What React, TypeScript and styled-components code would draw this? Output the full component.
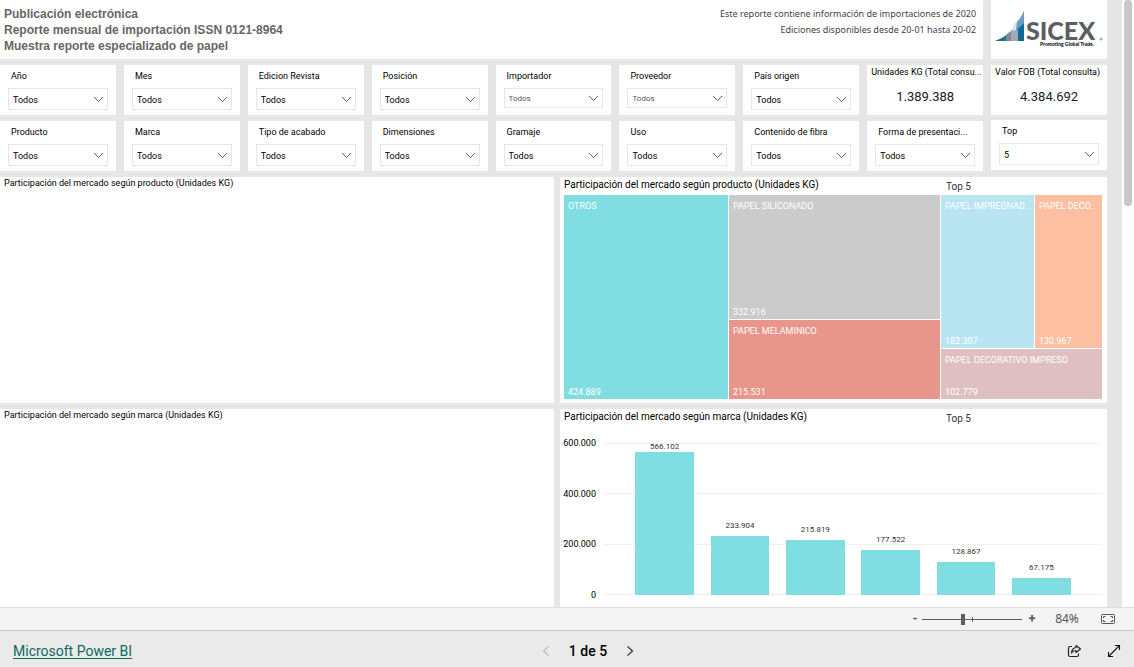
import React from 'react';
import styled, { createGlobalStyle, css } from 'styled-components';

const GlobalStyle = createGlobalStyle`
  * { box-sizing: border-box; }
  html, body, #root { height: 100%; margin: 0; }
  body { font-family: Roboto, "Noto Sans", sans-serif; font-size: 9px; color: #000; background: #fff; }
  h1, h2, p { margin: 0; }
`;

const TEAL = '#80dde1';

const Shell = styled.div`
  display: flex;
  flex-direction: column;
  height: 100vh;
`;

const Viewport = styled.div`
  flex: 1;
  min-height: 0;
  display: flex;
  overflow: hidden;
`;

const Report = styled.main`
  flex: 1;
  min-width: 0;
  padding-right: 15px;
  background: #e6e6e6;
`;

const ScrollTrack = styled.div`
  width: 12px;
  padding: 0 2px;
`;

const ScrollThumb = styled.div`
  height: 34%;
  border-radius: 4px;
  background: #c8c8c8;
`;

const CardGrid = styled.div`
  display: grid;
  grid-template-columns: repeat(9, minmax(0, 1fr));
  column-gap: 8px;
  row-gap: 6px;
  margin-bottom: 6px;
`;

const Card = styled.section`
  background: #fff;
  min-width: 0;
`;

const Header = styled(Card)`
  grid-column: span 8;
  display: flex;
  justify-content: space-between;
  height: 59px;
  padding: 6px 7px 0 4px;
`;

const Heading = styled.h1`
  font: bold 12px/16px "Liberation Sans", Arial, sans-serif;
  color: #666;
`;

const HeaderNote = styled.p`
  font: 9px/16px "Noto Sans", sans-serif;
  color: #444;
  text-align: right;
`;

const LogoCard = styled(Card)`
  display: flex;
  justify-content: center;
  align-items: flex-start;
  padding-top: 8px;
`;

const FilterCard = styled(Card)<{ $raised?: boolean }>`
  display: flex;
  flex-direction: column;
  gap: 6px;
  height: 50px;
  padding: 5px 8px 0;
  ${(p) => p.$raised && css`margin-top: -1px;`}
`;

const FilterLabel = styled.label`
  padding-left: 3px;
  line-height: 12px;
  white-space: nowrap;
`;

const SelectBox = styled.div`
  display: grid;
  align-items: center;
  border: 1px solid #e6e6e6;

  > * { grid-area: 1 / 1; }
  > svg { justify-self: end; margin-right: 3px; pointer-events: none; }
`;

const Select = styled.select<{ $muted?: boolean }>`
  appearance: none;
  width: 100%;
  height: ${(p) => (p.$muted ? 18 : 20)}px;
  padding: ${(p) => (p.$muted ? 0 : 2)}px 20px 0 4px;
  border: 0;
  border-radius: 0;
  background: transparent;
  font: ${(p) => (p.$muted ? 8 : 9)}px Roboto, sans-serif;
  color: ${(p) => (p.$muted ? '#555' : '#000')};
`;

const MetricCard = styled(Card)`
  height: 50px;
  padding: 0 4px;
  text-align: center;
`;

const MetricLabel = styled.h2`
  font-weight: 400;
  font-size: 9px;
  line-height: 14px;
  text-align: left;
  white-space: nowrap;
`;

const MetricValue = styled.p`
  padding-top: 8px;
  font-size: 13px;
  line-height: 20px;
  color: #222;
`;

const PanelGrid = styled.div`
  display: grid;
  grid-template-columns: minmax(0, 554fr) minmax(0, 547fr);
  gap: 6px;
`;

const Panel = styled(Card)`
  display: flex;
  flex-direction: column;
  height: 226px;
  padding: 0 5px 4px 4px;
`;

const PanelHead = styled.header`
  display: grid;
  grid-template-columns: 382fr 156fr;
  height: 18px;
`;

const PanelTitle = styled.h2<{ $small?: boolean }>`
  font-weight: 400;
  font-size: ${(p) => (p.$small ? 9 : 10)}px;
  line-height: ${(p) => (p.$small ? 13 : 16)}px;
  white-space: nowrap;
`;

const TopBadge = styled.p`
  padding-top: 2px;
  font-size: 10px;
  line-height: 16px;
  color: #333;
`;

const Treemap = styled.div`
  flex: 1;
  display: grid;
  grid-template-columns: 164fr 211fr 161fr;
  gap: 1px;
`;

const TreeColumn = styled.div<{ $rows: string }>`
  display: grid;
  grid-template-rows: ${(p) => p.$rows};
  gap: 1px;
`;

const TreeRow = styled.div`
  display: grid;
  grid-template-columns: 93fr 67fr;
  gap: 1px;
`;

const Tile = styled.div<{ $color: string }>`
  display: flex;
  flex-direction: column;
  justify-content: space-between;
  min-width: 0;
  padding: 5px 4px 1px;
  background: ${(p) => p.$color};
  color: #fff;
  line-height: 12px;
  white-space: nowrap;
`;

const Chart = styled.div`
  display: flex;
  gap: 8px;
  margin-top: 10px;
  padding-left: 1px;
`;

const Axis = styled.div`
  display: flex;
  flex-direction: column;
  justify-content: space-between;
  align-items: flex-end;
  width: 31px;
  height: 164px;
  line-height: 12px;
`;

const gridLine = 'linear-gradient(#f0f0f0 0 0)';

const Plot = styled.div`
  flex: 1;
  display: grid;
  grid-template-columns: repeat(6, minmax(0, 1fr));
  align-items: end;
  height: 152px;
  margin-top: 6px;
  padding: 0 23px;
  background:
    ${gridLine} 0 0 / 100% 1px no-repeat,
    ${gridLine} 0 33% / 100% 1px no-repeat,
    ${gridLine} 0 67% / 100% 1px no-repeat,
    ${gridLine} 0 100% / 100% 1px no-repeat;
`;

const Column = styled.div`
  display: flex;
  flex-direction: column;
  justify-content: flex-end;
  align-items: center;
  height: 152px;
`;

const BarValue = styled.span`
  height: 15px;
  font-size: 8px;
  line-height: 10px;
  color: #333;
`;

const Bar = styled.div`
  flex-shrink: 0;
  width: 78%;
  background: ${TEAL};
`;

const ZoomBar = styled.div`
  display: flex;
  align-items: center;
  justify-content: flex-end;
  height: 24px;
  padding-right: 18px;
  border-top: 1px solid #ddd;
  border-bottom: 1px solid #c8c8c8;
  background: #f4f4f4;
  color: #555;
`;

const IconButton = styled.button`
  display: flex;
  align-items: center;
  justify-content: center;
  padding: 0;
  border: 0;
  background: none;
  color: inherit;
  font: bold 13px/16px Roboto, sans-serif;

  &:disabled { color: #bbb; }
`;

const StepButton = styled(IconButton)`
  width: 10px;
  height: 16px;
`;

const Slider = styled.input`
  appearance: none;
  width: 100px;
  height: 12px;
  margin: 0 5px 0 2px;
  background: linear-gradient(#605e5c 0 0) 0 6px / 100% 1px no-repeat,
    linear-gradient(#605e5c 0 0) 50px 4px / 1px 5px no-repeat;

  &::-webkit-slider-thumb {
    appearance: none;
    width: 4px;
    height: 11px;
    background: #605e5c;
  }
`;

const ZoomValue = styled.output`
  width: 40px;
  margin: 0 13px 0 10px;
  text-align: center;
  font: 12px/16px "Noto Sans", sans-serif;
`;

const Footer = styled.footer`
  display: grid;
  grid-template-columns: 1fr auto 1fr;
  align-items: center;
  height: 36px;
  padding: 3px 13px 0;
  background: #eaeaea;
`;

const BrandLink = styled.a`
  justify-self: start;
  font-size: 14px;
  line-height: 20px;
  color: #0b6a5c;
  text-underline-offset: 2px;
`;

const Pager = styled.nav`
  display: flex;
  align-items: center;
  gap: 19px;
  padding-left: 42px;
  font-size: 14px;
  font-weight: 500;
  line-height: 20px;
`;

const Actions = styled.div`
  display: flex;
  align-items: center;
  justify-self: end;
  gap: 25px;
`;

const Logo = () => (
  <svg width="110" height="42" viewBox="0 0 110 42" role="img" aria-label="SICEX">
    <path d="M1 33C14 28 25 17 30 3V33Z" fill="#8fb0cb" />
    <path d="M1 33C7 31 12 28 16 24L14 33Z" fill="#24708f" />
    <path d="M12 33V27L16 24L19 26V33Z" fill="#818a90" />
    <path d="M17 33V25L20 23L24 26V33Z" fill="#a3a9ad" />
    <path d="M20 17C25 12 28 8 30 3V17L25 23L20 22Z" fill="#6c9bc2" />
    <path d="M19 18L23 14L22 22L19 23Z" fill="#dbe5ec" />
    <path d="M24 21L30 15V33H24Z" fill="#0e6c96" />
    <text x="32" y="32" fontFamily="Lato, sans-serif" fontWeight="900" fontSize="25" fill="#5a6062">SICEX</text>
    <circle cx="107" cy="31" r="1.5" fill="#aaa" />
    <text x="46" y="38" fontFamily="Lato, sans-serif" fontWeight="900" fontSize="5" fill="#111">Promoting Global Trade.</text>
  </svg>
);

const Chevron = () => (
  <svg width="11" height="7" viewBox="0 0 11 7" fill="none" stroke="#666" strokeWidth="1">
    <path d="M1 1L5.5 5.5L10 1" />
  </svg>
);

type FilterProps = { label: string; value?: string; muted?: boolean; raised?: boolean };

const Filter = ({ label, value = 'Todos', muted, raised }: FilterProps) => {
  const id = React.useId();
  return (
    <FilterCard $raised={raised}>
      <FilterLabel htmlFor={id}>{label}</FilterLabel>
      <SelectBox>
        <Select id={id} $muted={muted} defaultValue={value}>
          <option>{value}</option>
        </Select>
        <Chevron />
      </SelectBox>
    </FilterCard>
  );
};

const Metric = ({ label, value }: { label: string; value: string }) => (
  <MetricCard>
    <MetricLabel>{label}</MetricLabel>
    <MetricValue>{value}</MetricValue>
  </MetricCard>
);

const TreeTile = ({ name, value, color }: { name: string; value: string; color: string }) => (
  <Tile $color={color}>
    <span>{name}</span>
    <span>{value}</span>
  </Tile>
);

const firstRow: FilterProps[] = [
  { label: 'Año' }, { label: 'Mes' }, { label: 'Edicion Revista' }, { label: 'Posición' },
  { label: 'Importador', muted: true }, { label: 'Proveedor', muted: true }, { label: 'País origen' },
];

const secondRow: FilterProps[] = [
  { label: 'Producto' }, { label: 'Marca' }, { label: 'Tipo de acabado' }, { label: 'Dimensiones' },
  { label: 'Gramaje' }, { label: 'Uso' }, { label: 'Contenido de fibra' },
  { label: 'Forma de presentaci...' }, { label: 'Top', value: '5', raised: true },
];

const brands = [566102, 233904, 215819, 177522, 128867, 67175];
const AXIS_MAX = 600000;
const thousands = (n: number) => String(n).replace(/(\d)(?=(\d{3})+$)/g, '$1.');

export default function App() {
  return (
    <Shell>
      <GlobalStyle />
      <Viewport>
        <Report>
          <CardGrid>
            <Header>
              <Heading>
                Publicación electrónica<br />
                Reporte mensual de importación ISSN 0121-8964<br />
                Muestra reporte especializado de papel
              </Heading>
              <HeaderNote>
                Este reporte contiene información de importaciones de 2020<br />
                Ediciones disponibles desde 20-01 hasta 20-02
              </HeaderNote>
            </Header>
            <LogoCard><Logo /></LogoCard>
            {firstRow.map((f) => <Filter key={f.label} {...f} />)}
            <Metric label="Unidades KG (Total consu..." value="1.389.388" />
            <Metric label="Valor FOB (Total consulta)" value="4.384.692" />
            {secondRow.map((f) => <Filter key={f.label} {...f} />)}
          </CardGrid>
          <PanelGrid>
            <Panel>
              <PanelTitle $small>Participación del mercado según producto (Unidades KG)</PanelTitle>
            </Panel>
            <Panel>
              <PanelHead>
                <PanelTitle>Participación del mercado según producto (Unidades KG)</PanelTitle>
                <TopBadge>Top 5</TopBadge>
              </PanelHead>
              <Treemap>
                <TreeTile name="OTROS" value="424.889" color={TEAL} />
                <TreeColumn $rows="123fr 79fr">
                  <TreeTile name="PAPEL SILICONADO" value="332.916" color="#cbcbcb" />
                  <TreeTile name="PAPEL MELAMINICO" value="215.531" color="#e8958b" />
                </TreeColumn>
                <TreeColumn $rows="153fr 50fr">
                  <TreeRow>
                    <TreeTile name="PAPEL IMPREGNAD..." value="182.307" color="#b9e4f1" />
                    <TreeTile name="PAPEL DECO..." value="130.967" color="#fdbfa1" />
                  </TreeRow>
                  <TreeTile name="PAPEL DECORATIVO IMPRESO" value="102.779" color="#dfbfc1" />
                </TreeColumn>
              </Treemap>
            </Panel>
            <Panel>
              <PanelTitle $small>Participación del mercado según marca (Unidades KG)</PanelTitle>
            </Panel>
            <Panel>
              <PanelHead>
                <PanelTitle>Participación del mercado según marca (Unidades KG)</PanelTitle>
                <TopBadge>Top 5</TopBadge>
              </PanelHead>
              <Chart>
                <Axis>
                  <span>600.000</span>
                  <span>400.000</span>
                  <span>200.000</span>
                  <span>0</span>
                </Axis>
                <Plot>
                  {brands.map((n) => (
                    <Column key={n}>
                      <BarValue>{thousands(n)}</BarValue>
                      <Bar style={{ height: `${(n / AXIS_MAX) * 100}%` }} />
                    </Column>
                  ))}
                </Plot>
              </Chart>
            </Panel>
          </PanelGrid>
        </Report>
        <ScrollTrack><ScrollThumb /></ScrollTrack>
      </Viewport>
      <ZoomBar>
        <StepButton aria-label="Alejar">-</StepButton>
        <Slider type="range" min="10" max="190" defaultValue="84" aria-label="Zoom" />
        <StepButton aria-label="Acercar">+</StepButton>
        <ZoomValue>84%</ZoomValue>
        <IconButton aria-label="Ajustar a la página">
          <svg width="16" height="12" viewBox="0 0 16 12" fill="none" stroke="#555">
            <rect x="1.5" y="1.5" width="13" height="9" rx="1" />
            <path d="M3.5 5V3.5H5.500M10.500 3.500H12.500V5M12.500 7V8.500H10.500M5.500 8.500H3.500V7" />
          </svg>
        </IconButton>
      </ZoomBar>
      <Footer>
        <BrandLink href="#powerbi">Microsoft Power BI</BrandLink>
        <Pager aria-label="Páginas">
          <IconButton disabled aria-label="Página anterior">
            <svg width="8" height="12" viewBox="0 0 8 12" fill="none" stroke="currentColor" strokeWidth="1.2">
              <path d="M6.500 1.500L1.500 6L6.500 10.500" />
            </svg>
          </IconButton>
          <span>1 de 5</span>
          <IconButton aria-label="Página siguiente">
            <svg width="8" height="12" viewBox="0 0 8 12" fill="none" stroke="#333" strokeWidth="1.2">
              <path d="M1.500 1.500L6.500 6L1.500 10.500" />
            </svg>
          </IconButton>
        </Pager>
        <Actions>
          <IconButton aria-label="Compartir">
            <svg width="15" height="14" viewBox="0 0 15 14" fill="none" stroke="#222" strokeWidth="1.2" strokeLinejoin="round">
              <path d="M5 2.500H3Q1.500 2.500 1.500 4V11Q1.500 12.500 3 12.500H10Q11.500 12.500 11.500 11V9.500" />
              <path d="M9 1.500L13.500 5L9 8.500V6.500Q6 6.500 4.500 9Q5 4 9 3.500Z" />
            </svg>
          </IconButton>
          <IconButton aria-label="Pantalla completa">
            <svg width="14" height="14" viewBox="0 0 14 14" fill="none" stroke="#111" strokeWidth="1.1">
              <path d="M1.500 12.500L12.500 1.500M8 1.500H12.500V6M1.500 8V12.500H6" />
            </svg>
          </IconButton>
        </Actions>
      </Footer>
    </Shell>
  );
}
